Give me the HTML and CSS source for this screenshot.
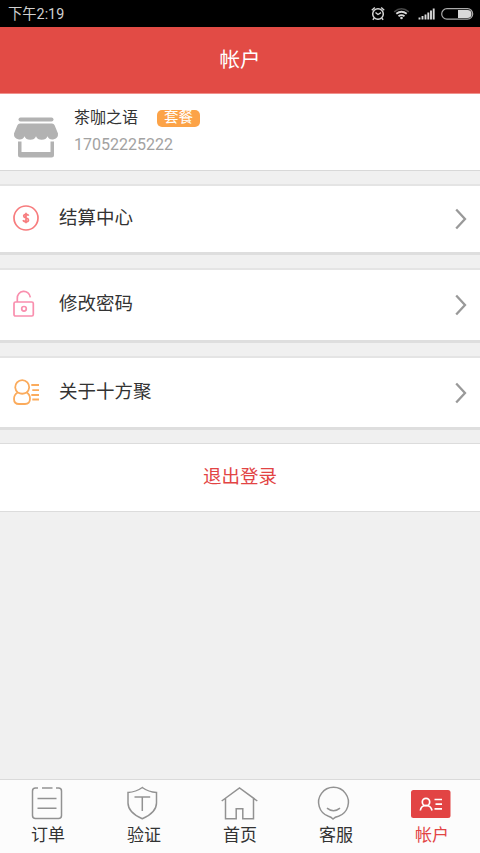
FILE: index.html
```html
<!DOCTYPE html>
<html lang="zh-CN">
<head>
<meta charset="utf-8">
<title>帐户</title>
<link rel="stylesheet" href="styles.css">
</head>
<body>
<div class="app">
  <div class="status">
    <span class="time">下午2:19</span>
    <svg class="status-icons" width="110" height="27" viewBox="370 0 110 27" fill="none" stroke="#d8d8d8">
      <circle cx="378" cy="14" r="5.3" stroke-width="1.5"/>
      <path d="M375.5 12.5l2.5 2 3-1.8M371.8 10.2l3-2.7M384.2 10.2l-3-2.7M374.2 18.2l-1.4 1.6M381.8 18.2l1.4 1.6" stroke-width="1.4"/>
      <path d="M394.2 11.8q7.3-6 14.6 0" stroke="#484848" stroke-width="1.5"/>
      <path d="M396.3 13.8q5.2-4.2 10.4 0M398.5 16.2q3-2.2 6 0" stroke-width="1.9"/>
      <circle cx="401.5" cy="18" r="1.3" fill="#d8d8d8" stroke="none"/>
      <path d="M419.5 19.5v-2M422.5 19.5v-3.5M425.5 19.5v-5M428.3 19.5v-7M431 19.5v-9M433.7 19.5v-11" stroke-width="1.9"/>
      <rect x="441.7" y="8.7" width="31" height="10.4" rx="5.2" stroke="#aaa" stroke-width="1.2"/>
      <path d="M458 10h9.5a4 4 0 0 1 0 8H458z" fill="#d8d8d8" stroke="none"/>
    </svg>
  </div>
  <header class="header">帐户</header>

  <section class="profile">
    <svg class="shop" width="46" height="42" viewBox="13 116 46 42" fill="#b2b2b2">
      <rect x="18.5" y="117.500" width="35" height="4" rx="2"/>
      <path d="M20 123.500h32q1.800 0 2.600 1.800L58 133.500a5.500 5.500 0 0 1-10.500 2.700a6 5 0 0 1-11.500 0a6 5 0 0 1-11.500 0A5.500 5.500 0 0 1 14 133.500l3.400-8.200Q18.200 123.500 20 123.500z"/>
      <path d="M18 141.500h3.500v10.500h29v-10.500H54V155q0 2.500-2.500 2.500h-31Q18 157.500 18 155z"/>
    </svg>
    <div class="who">
      <div class="name-line"><span class="name">茶咖之语</span><span class="tag">套餐</span></div>
      <div class="phone">17052225222</div>
    </div>
  </section>

  <a class="row settle">
    <svg class="row-icon" width="28" height="28" viewBox="0 0 28 28" fill="none" stroke="#f77c7e">
      <circle cx="14" cy="14" r="12" stroke-width="1.7"/>
      <path d="M16.6 11.800Q16.200 10.300 14 10.300t-2.300 1.700q0 1.400 2.300 1.900t2.500 2.100q0 1.700-2.500 1.700t-2.800-1.700M14 8.700v10.600" stroke-width="1.7"/>
    </svg>
    <span class="label">结算中心</span>
    <svg class="arrow" width="12" height="22" viewBox="0 0 12 22"><path d="M1.2 1.5 10 11 1.2 20.5"/></svg>
  </a>
  <a class="row password">
    <svg class="row-icon" width="28" height="28" viewBox="0 0 28 28" fill="none" stroke="#f98fae" stroke-width="1.7">
      <rect x="2" y="12" width="19.3" height="14" rx="1.5"/>
      <path d="M5.3 12V8.500A6.500 6.500 0 0 1 18.300 7.300"/>
      <circle cx="12" cy="18.8" r="2.3"/>
    </svg>
    <span class="label">修改密码</span>
    <svg class="arrow" width="12" height="22" viewBox="0 0 12 22"><path d="M1.2 1.5 10 11 1.2 20.5"/></svg>
  </a>
  <a class="row about">
    <svg class="row-icon" width="28" height="28" viewBox="0 0 28 28" fill="none" stroke="#fbab5c" stroke-width="1.8">
      <path d="M5.800 14.500A7 7 0 1 1 14.600 14.500Q18 16.500 18 20.500 18 26 13 26H7Q2 26 2 21 2 16.500 5.800 14.500q4.400 2.500 8.800 0"/>
      <path d="M19.300 7H27M20.300 12.200H27M19.300 17H27M20.300 21.500H27"/>
    </svg>
    <span class="label">关于十方聚</span>
    <svg class="arrow" width="12" height="22" viewBox="0 0 12 22"><path d="M1.2 1.5 10 11 1.2 20.5"/></svg>
  </a>
  <a class="logout">退出登录</a>

  <nav class="tabs">
    <a class="tab">
      <svg width="44" height="36" viewBox="26 785 44 36">
        <path d="M38 788h-2.500q-3 0-3 3v24.500q0 3 3 3h23q3 0 3-3V791q0-3-3-3H56M42 788h10.500M37.500 798.500h19M37.500 808.300h19"/>
      </svg>
      <span>订单</span>
    </a>
    <a class="tab">
      <svg width="44" height="36" viewBox="122 785 44 36">
        <path d="M142.300 787.500Q148.500 792 156.500 792.500V803q0 9.500-14.200 15.800Q128 812.500 128 803v-10.500q8-.5 14.300-5zM134.500 797h15.700M142.300 797v14"/>
      </svg>
      <span>验证</span>
    </a>
    <a class="tab">
      <svg width="44" height="36" viewBox="218 785 44 36">
        <path d="M221.700 801 239.500 788l17.800 13M225.500 798.500v20.300h10.700v-10h6.600v10h10.700v-20.300"/>
      </svg>
      <span>首页</span>
    </a>
    <a class="tab">
      <svg width="44" height="36" viewBox="314 785 44 36">
        <path d="M328.500 816.300A14.900 14.900 0 1 1 338.500 816.300Q335 817 333 819 331 817 328.500 816.300zM327 808.200q6.500 5.300 13 0"/>
      </svg>
      <span>客服</span>
    </a>
    <a class="tab active">
      <svg width="44" height="36" viewBox="410 785 44 36">
        <rect class="card" x="411" y="790" width="39.5" height="28" rx="2.5"/>
        <g class="person"><circle cx="426" cy="802" r="3.7"/><path d="M420.300 810.500q.7-5 5.700-5t6 5M434.500 799.500h7.500M435.500 804.200h6.500M434.500 808.800h7.500"/></g>
      </svg>
      <span>帐户</span>
    </a>
  </nav>
</div>
</body>
</html>
```
FILE: styles.css
```css
* { box-sizing: border-box; }
body { margin: 0; }
.app {
  width: 480px;
  height: 853px;
  display: flex;
  flex-direction: column;
  background: #f0f0f0;
  color: #333;
  font-family: Roboto, "Noto Sans CJK SC", sans-serif;
}
.status {
  height: 27px;
  display: flex;
  align-items: center;
  justify-content: space-between;
  padding-left: 8px;
  background: #000;
  color: #d0d0d0;
}
.time { font-size: 14.3px; line-height: 27px; padding-top: 1px; }
.header {
  height: 67px;
  border-bottom: 1px solid #f0918c;
  background: #e24b45;
  color: #fff;
  font-size: 20.5px;
  line-height: 66px;
  text-align: center;
}
.profile {
  height: 77px;
  display: flex;
  padding: 12px 0 0 13px;
  background: #fff;
  border-bottom: 1px solid #d8d8d8;
}
.shop { margin-top: 10px; }
.who { margin-left: 15px; }
.name-line { height: 24px; display: flex; align-items: center; }
.name { font-size: 16px; line-height: 24px; }
.tag {
  width: 43px;
  height: 17px;
  margin-left: 19px;
  border-radius: 5px;
  background: #fca348;
  color: #fff;
  font-size: 14.5px;
  line-height: 16px;
  text-align: center;
}
.phone { margin-top: 5px; color: #a2a2a2; font-size: 16px; line-height: 20px; }
.row {
  display: flex;
  align-items: center;
  padding: 0 13px 2px 12px;
  background: #fff;
  border-top: 2px solid #e4e4e4;
  border-bottom: 3px solid #dedede;
  font-size: 18.5px;
}
.settle { height: 71px; margin-top: 13px; }
.password { height: 75px; margin-top: 13px; }
.about { height: 74px; margin-top: 13px; }
.label { flex: 1; margin-left: 19px; line-height: 28px; }
.arrow { margin-top: 2px; fill: none; stroke: #999; stroke-width: 2.3; }
.logout {
  height: 69px;
  margin-top: 13px;
  background: #fff;
  border-top: 1px solid #dcdcdc;
  border-bottom: 1px solid #dcdcdc;
  color: #e24444;
  font-size: 18.5px;
  line-height: 67px;
  text-align: center;
}
.tabs {
  height: 74px;
  margin-top: auto;
  display: flex;
  background: #fcfcfc;
  border-top: 1px solid #dadada;
}
.tab {
  flex: 1;
  display: flex;
  flex-direction: column;
  align-items: center;
  padding-top: 5px;
  font-size: 17px;
  line-height: 28px;
}
.tab svg { fill: none; stroke: #929292; stroke-width: 1.5; }
.tab .card { fill: #e24444; stroke: none; }
.tab .person { stroke: #fff; stroke-width: 1.7; }
.active { color: #e24444; }
```
